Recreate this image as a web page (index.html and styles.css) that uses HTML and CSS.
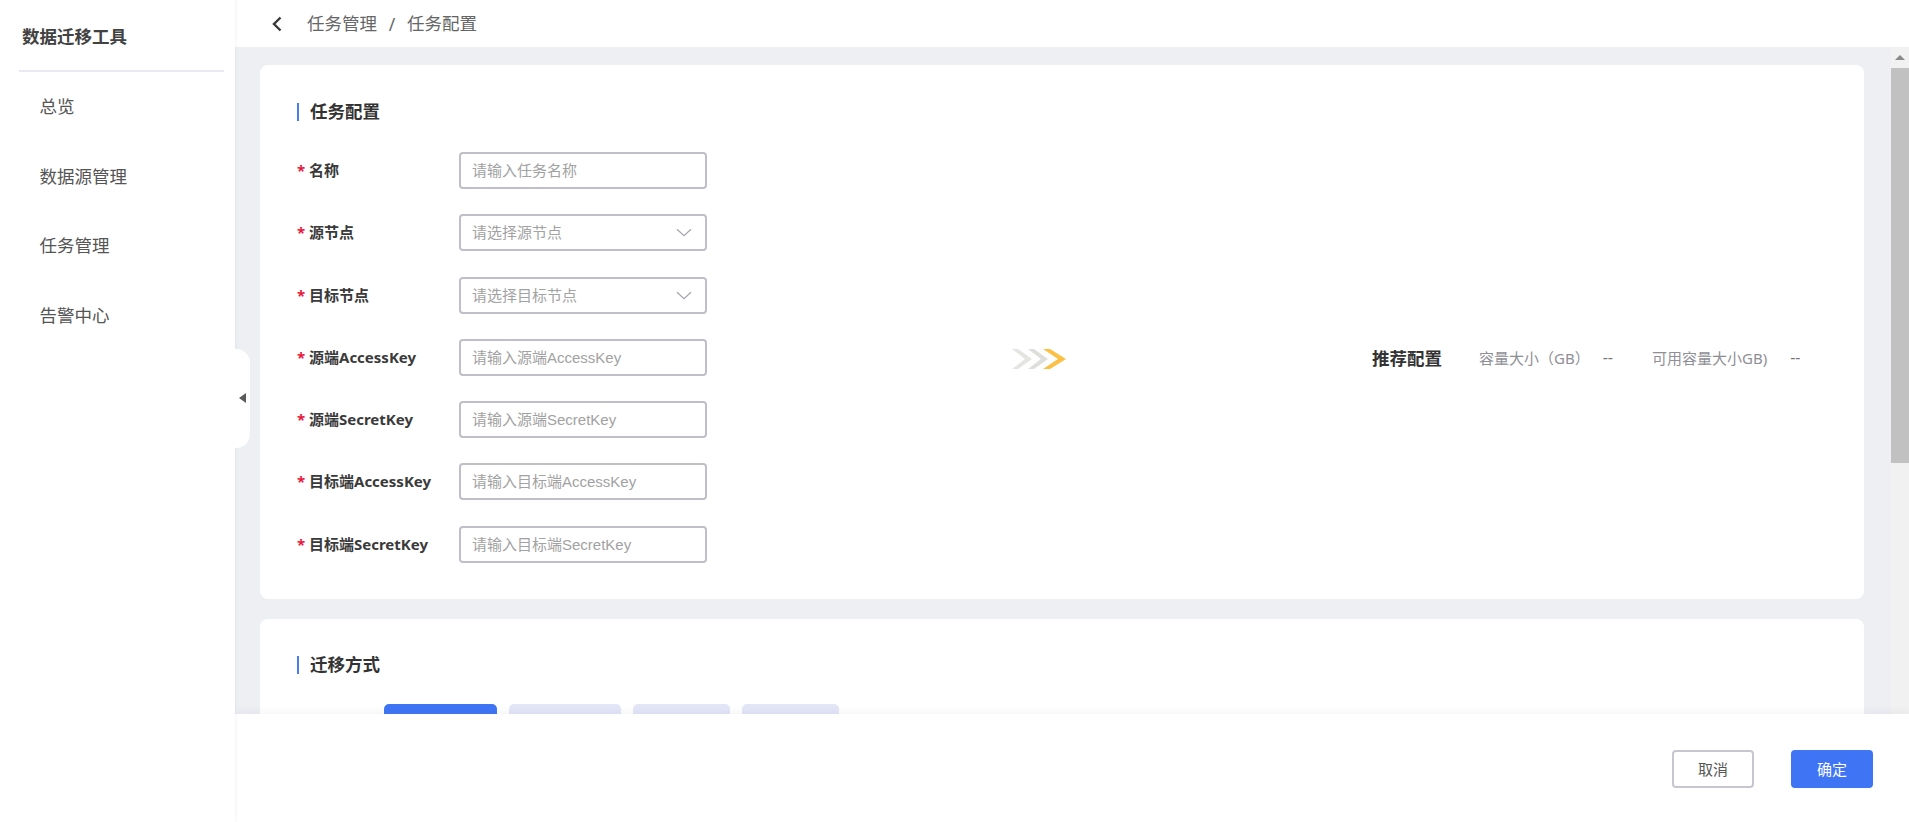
FILE: index.html
```html
<!DOCTYPE html>
<html lang="zh-CN">
<head>
<meta charset="utf-8">
<title>任务配置</title>
<link rel="stylesheet" href="styles.css">
</head>
<body>
<aside class="sidebar">
  <div class="brand">数据迁移工具</div>
  <nav class="nav">
    <a class="nav-item">总览</a>
    <a class="nav-item">数据源管理</a>
    <a class="nav-item">任务管理</a>
    <a class="nav-item">告警中心</a>
  </nav>
  <button class="collapse" aria-label="收起"><span class="collapse-arrow"></span></button>
</aside>
<div class="main">
  <header class="topbar">
    <svg class="back" width="10" height="16" viewBox="0 0 10 16"><path d="M8.5 1.5 2 8l6.5 6.5" fill="none" stroke="#3a3a3a" stroke-width="2.4"/></svg>
    <span class="crumb">任务管理</span>
    <span class="crumb-sep">/</span>
    <span class="crumb">任务配置</span>
  </header>
  <div class="scroller">
    <div class="content">
      <section class="card card-config">
        <h2 class="card-title">任务配置</h2>
        <div class="config-body">
          <div class="form">
            <div class="row"><label class="label"><i class="star">*</i>名称</label><div class="field"><span class="ph">请输入任务名称</span></div></div>
            <div class="row"><label class="label"><i class="star">*</i>源节点</label><div class="field"><span class="ph">请选择源节点</span><svg class="caret" width="16" height="9" viewBox="0 0 16 9"><path d="M1 1.2 8 7.8l7-6.6" fill="none" stroke="#a3a5ad" stroke-width="1.2"/></svg></div></div>
            <div class="row"><label class="label"><i class="star">*</i>目标节点</label><div class="field"><span class="ph">请选择目标节点</span><svg class="caret" width="16" height="9" viewBox="0 0 16 9"><path d="M1 1.2 8 7.8l7-6.6" fill="none" stroke="#a3a5ad" stroke-width="1.2"/></svg></div></div>
            <div class="row"><label class="label"><i class="star">*</i>源端AccessKey</label><div class="field"><span class="ph">请输入源端AccessKey</span></div></div>
            <div class="row"><label class="label"><i class="star">*</i>源端SecretKey</label><div class="field"><span class="ph">请输入源端SecretKey</span></div></div>
            <div class="row"><label class="label"><i class="star">*</i>目标端AccessKey</label><div class="field"><span class="ph">请输入目标端AccessKey</span></div></div>
            <div class="row"><label class="label"><i class="star">*</i>目标端SecretKey</label><div class="field"><span class="ph">请输入目标端SecretKey</span></div></div>
          </div>
          <svg class="chevrons" width="54" height="22" viewBox="0 0 54 22">
            <polygon points="0,1 6,1 20,11 6,21 0,21 13,11" fill="#e4e4e0"/>
            <polygon points="16,1 22,1 36,11 22,21 16,21 29,11" fill="#dededa"/>
            <polygon points="31,1 38,1 54,11 38,21 31,21 46,11" fill="#fcc044"/>
          </svg>
          <div class="recommend">
            <strong class="rec-title">推荐配置</strong>
            <span class="rec-key rec-key-first">容量大小（GB）</span>
            <span class="rec-val rec-val-first">--</span>
            <span class="rec-key rec-key-second">可用容量大小GB)</span>
            <span class="rec-val rec-val-second">--</span>
          </div>
        </div>
      </section>
      <section class="card card-method">
        <h2 class="card-title">迁移方式</h2>
        <div class="tabs">
          <span class="tab tab-active tab-wide"></span>
          <span class="tab tab-wide"></span>
          <span class="tab tab-narrow"></span>
          <span class="tab tab-narrow"></span>
        </div>
      </section>
    </div>
    <div class="scrollbar">
      <span class="scroll-up"></span>
      <span class="scroll-thumb"></span>
    </div>
  </div>
  <footer class="footer">
    <button class="btn btn-ghost">取消</button>
    <button class="btn btn-primary">确定</button>
  </footer>
</div>
</body>
</html>
```
FILE: styles.css
```css
* { box-sizing: border-box; }
html, body { height: 100%; }
body {
  margin: 0;
  height: 822px;
  overflow: hidden;
  display: flex;
  background: #fff;
  color: #333;
  font-family: "Noto Sans", "Noto Sans CJK SC", sans-serif;
}
.sidebar {
  position: relative;
  z-index: 3;
  flex: 0 0 235px;
  padding: 0 11px 0 19px;
  background: #fff;
  box-shadow: 1px 0 3px rgba(30, 40, 70, .05);
}
.brand {
  height: 72px;
  padding: 23px 0 0 3px;
  border-bottom: 2px solid #e8eaf1;
  font-size: 17.5px;
  line-height: 26px;
  font-weight: 700;
  color: #424242;
}
.nav { display: flex; flex-direction: column; padding-top: 0; }
.nav-item {
  height: 69.5px;
  padding: 21px 0 0 20.5px;
  font-size: 17.5px;
  line-height: 26px;
  color: #555;
}
.collapse {
  position: absolute;
  left: 235px;
  top: 349px;
  width: 15px;
  height: 99px;
  padding: 0;
  border: 0;
  border-radius: 0 14px 14px 0;
  background: #fff;
}
.collapse-arrow {
  position: absolute;
  left: 4px;
  top: 44px;
  border-style: solid;
  border-width: 5.5px 7px 5.5px 0;
  border-color: transparent #5a5a5a transparent transparent;
}
.main {
  flex: 1;
  min-width: 0;
  display: flex;
  flex-direction: column;
}
.topbar {
  flex: 0 0 47px;
  display: flex;
  align-items: center;
  padding: 0 0 0 37px;
  background: #fff;
  font-size: 17.5px;
  color: #666;
}
.back { margin-right: 25px; }
.crumb { line-height: 1; }
.crumb-sep { width: 30px; text-align: center; }
.scroller {
  flex: 1;
  min-height: 0;
  display: flex;
  overflow: hidden;
  background: #edeff3;
}
.content {
  flex: 1;
  min-width: 0;
  padding: 18px 27px 0 25px;
}
.card {
  background: #fff;
  border-radius: 8px;
  padding: 38px 37px 0;
}
.card-config { height: 534px; margin-bottom: 20px; }
.card-method { height: 300px; padding-top: 37px; }
.card-title {
  margin: 0;
  height: 18px;
  padding-left: 11px;
  border-left: 2px solid #4b7bf0;
  font-size: 17.5px;
  line-height: 16px;
  font-weight: 700;
  color: #333;
}
.config-body {
  display: flex;
  align-items: center;
  margin-top: 31px;
}
.form {
  flex: 0 0 410px;
  display: flex;
  flex-direction: column;
  gap: 25.3px;
}
.row { display: flex; align-items: center; height: 37px; }
.label {
  flex: 0 0 162px;
  padding-bottom: 2px;
  font-size: 15px;
  font-weight: 700;
  color: #3a3a3a;
  white-space: nowrap;
}
.star {
  display: inline-block;
  width: 12px;
  color: #e8173c;
  font-style: normal;
}
.field {
  flex: 0 0 248px;
  height: 37px;
  display: flex;
  align-items: center;
  justify-content: space-between;
  padding: 0 13px 2px 11px;
  border: 2px solid #bfbfc8;
  border-radius: 4px;
  background: #fff;
}
.ph {
  font-family: "Liberation Sans", "Noto Sans CJK SC", sans-serif;
  font-size: 15px;
  color: #a2a2a2;
}
.caret { margin-top: 2px; }
.chevrons { flex: none; margin: 4px 0 0 305px; }
.recommend {
  flex: none;
  display: flex;
  align-items: center;
  margin-left: 306px;
  white-space: nowrap;
}
.rec-title { font-size: 17.5px; font-weight: 700; color: #333; }
.rec-key { font-size: 15px; color: #8f8f96; }
.rec-key-first { margin-left: 37px; }
.rec-key-second { margin-left: 39px; }
.rec-val { font-size: 16px; color: #777; }
.rec-val-first { margin-left: 13px; }
.rec-val-second { margin-left: 23px; }
.tabs { display: flex; gap: 12px; margin-top: 30px; margin-left: 87px; }
.tab { height: 40px; border-radius: 5px; background: #e2e6f7; }
.tab-active { background: #3f75f5; }
.tab-wide { width: 112.5px; }
.tab-narrow { width: 97px; }
.scrollbar {
  flex: 0 0 18px;
  display: flex;
  flex-direction: column;
  background: #f1f1f1;
}
.scroll-up {
  flex: 0 0 21px;
  position: relative;
  background: #f1f1f1;
}
.scroll-up::before {
  content: "";
  position: absolute;
  left: 4px;
  top: 8px;
  border-style: solid;
  border-width: 0 5px 5px;
  border-color: transparent transparent #8a8a8a;
}
.scroll-thumb { height: 395px; background: #c1c1c1; }
.footer {
  position: relative;
  z-index: 2;
  flex: 0 0 108px;
  display: flex;
  justify-content: flex-end;
  align-items: flex-start;
  gap: 37px;
  padding: 36px 36px 0 0;
  background: #fff;
  box-shadow: 0 -2px 8px rgba(30, 40, 70, .05);
}
.btn {
  width: 82px;
  height: 38px;
  padding: 0 0 2px;
  border-radius: 4px;
  font-family: inherit;
  font-size: 15px;
}
.btn-ghost { background: #fff; border: 2px solid #c6c6d0; color: #555; }
.btn-primary { background: #3f75f5; border: 0; color: #fff; }
```
